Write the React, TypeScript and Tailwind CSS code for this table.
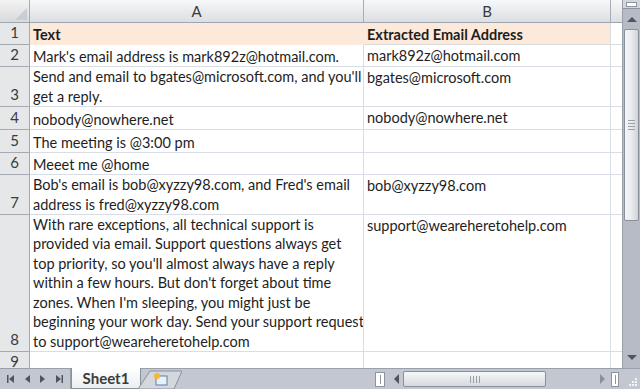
import React from "react";

const font = { fontFamily: "Lato, 'Open Sans', sans-serif" };

type Row = { n: number; h: number; a: string[]; b: string[] };

const rows: Row[] = [
  { n: 2, h: 22, a: ["Mark's email address is mark892z@hotmail.com."], b: ["mark892z@hotmail.com"] },
  { n: 3, h: 40, a: ["Send and email to bgates@microsoft.com, and you'll", "get a reply."], b: ["bgates@microsoft.com"] },
  { n: 4, h: 23, a: ["nobody@nowhere.net"], b: ["nobody@nowhere.net"] },
  { n: 5, h: 23, a: ["The meeting is @3:00 pm"], b: [] },
  { n: 6, h: 22, a: ["Meeet me @home"], b: [] },
  { n: 7, h: 40, a: ["Bob's email is bob@xyzzy98.com, and Fred's email", "address is fred@xyzzy98.com"], b: ["bob@xyzzy98.com"] },
  {
    n: 8,
    h: 137,
    a: [
      "With rare exceptions, all technical support is",
      "provided via email. Support questions always get",
      "top priority, so you'll almost always have a reply",
      "within a few hours. But don't forget about time",
      "zones. When I'm sleeping, you might just be",
      "beginning your work day. Send your support request",
      "to support@wearehere­tohelp.com".replace("\u00ad", ""),
    ],
    b: ["support@wearehere­tohelp.com".replace("\u00ad", "")],
  },
];

function Lines({ lines, bold }: { lines: string[]; bold?: boolean }) {
  return (
    <>
      {lines.map((l, i) => (
        <div key={i} className={"whitespace-nowrap leading-[19.5px] " + (bold ? "font-bold" : "")}>
          {l}
        </div>
      ))}
    </>
  );
}

function Tri({ dir, bar }: { dir: "l" | "r"; bar?: boolean }) {
  return (
    <svg width="10" height="10" viewBox="0 0 10 10">
      {dir === "l" ? (
        <>
          {bar && <rect x="1" y="1" width="1.5" height="8" fill="#4d5563" />}
          <polygon points="8,1 3,5 8,9" fill="#4d5563" />
        </>
      ) : (
        <>
          <polygon points="2,1 7,5 2,9" fill="#4d5563" />
          {bar && <rect x="7.5" y="1" width="1.5" height="8" fill="#4d5563" />}
        </>
      )}
    </svg>
  );
}

export default function App() {
  return (
    <div className="w-[640px] h-[389px] overflow-hidden flex flex-col bg-white text-[#1e1e1e]" style={font}>
      <div className="flex flex-1 min-h-0">
        {/* grid */}
        <div className="w-[622px] overflow-hidden flex flex-col">
          {/* column headers */}
          <div className="flex h-[23px] shrink-0 border-b border-[#9ea6b2] text-[15px] text-[#3b3b3b]">
            <div className="w-[30px] shrink-0 relative border-r border-[#a8adb5] bg-gradient-to-b from-[#f3f3f3] to-[#d9dadc]">
              <svg className="absolute right-[2px] bottom-[2px]" width="12" height="12" viewBox="0 0 12 12">
                <polygon points="12,0 12,12 0,12" fill="#c9ccd1" />
              </svg>
            </div>
            <div className="w-[334px] shrink-0 flex items-center justify-center border-r border-[#a8adb5] bg-gradient-to-b from-[#f7f8f9] to-[#dcdee2]">
              A
            </div>
            <div className="w-[247px] shrink-0 flex items-center justify-center border-r border-[#a8adb5] bg-gradient-to-b from-[#f7f8f9] to-[#dcdee2]">
              B
            </div>
            <div className="flex-1 bg-gradient-to-b from-[#f7f8f9] to-[#dcdee2]" />
          </div>
          {/* row 1 */}
          <div className="flex h-[22px] shrink-0 text-[14.5px]">
            <div className="w-[30px] shrink-0 flex items-end justify-center pb-[1px] border-r border-b border-[#a5aab2] bg-[#e6e7e9] text-[15px] text-[#3b3b3b]">
              1
            </div>
            <div className="w-[334px] shrink-0 bg-[#fde9d9] border-r border-b border-[#fde9d9] pl-[3px] flex items-end pb-[0px]">
              <Lines lines={["Text"]} bold />
            </div>
            <div className="w-[247px] shrink-0 bg-[#fde9d9] border-r border-b border-[#dadcdd] pl-[3px] flex items-end">
              <Lines lines={["Extracted Email Address"]} bold />
            </div>
            <div className="flex-1 border-b border-[#d8dde6]" />
          </div>
          {rows.map((r) => (
            <div key={r.n} className="flex shrink-0 text-[14.5px]" style={{ height: r.h }}>
              <div className="w-[30px] shrink-0 flex items-end justify-center pb-[1px] border-r border-b border-[#a5aab2] bg-[#e6e7e9] text-[15px] text-[#3b3b3b]">
                {r.n}
              </div>
              <div className="w-[334px] shrink-0 border-r border-b border-[#d8dde6] pl-[3px] flex flex-col justify-end overflow-hidden">
                <Lines lines={r.a} />
              </div>
              <div className="w-[247px] shrink-0 border-r border-b border-[#d8dde6] pl-[3px] flex flex-col justify-start pt-[1px] overflow-hidden">
                <Lines lines={r.b} />
              </div>
              <div className="flex-1 border-b border-[#d8dde6]" />
            </div>
          ))}
          {/* row 9 */}
          <div className="flex h-[22px] shrink-0">
            <div className="w-[30px] shrink-0 flex items-end justify-center pb-[1px] border-r border-b border-[#a5aab2] bg-[#e6e7e9] text-[15px] text-[#3b3b3b]">
              9
            </div>
            <div className="w-[334px] shrink-0 border-r border-b border-[#d8dde6]" />
            <div className="w-[247px] shrink-0 border-r border-b border-[#d8dde6]" />
            <div className="flex-1 border-b border-[#d8dde6]" />
          </div>
        </div>
        {/* vertical scrollbar */}
        <div className="w-[18px] shrink-0 flex flex-col bg-[#b6bbc5] border-l border-[#9aa0ab]">
          <div className="h-[9px] shrink-0 flex items-center justify-center bg-[#d3d6dc] border-b border-[#8e949f]">
            <div className="w-[11px] h-[5px] bg-white border border-[#8e949f]" />
          </div>
          <div className="h-[20px] shrink-0 flex items-center justify-center">
            <svg width="10" height="6" viewBox="0 0 10 6">
              <polygon points="0,6 5,1 10,6" fill="#4d5563" />
            </svg>
          </div>
          <div className="h-[192px] shrink-0 mx-[1px] rounded-[2px] border border-[#8a909a] bg-gradient-to-r from-[#f4f5f7] via-[#e9ebee] to-[#cfd3d9] flex items-center justify-center">
            <div className="flex flex-col gap-[2px]">
              <div className="w-[7px] h-[1px] bg-[#9aa0aa]" />
              <div className="w-[7px] h-[1px] bg-[#9aa0aa]" />
              <div className="w-[7px] h-[1px] bg-[#9aa0aa]" />
              <div className="w-[7px] h-[1px] bg-[#9aa0aa]" />
            </div>
          </div>
          <div className="flex-1" />
          <div className="h-[20px] shrink-0 flex items-center justify-center">
            <svg width="10" height="6" viewBox="0 0 10 6">
              <polygon points="0,0 10,0 5,5" fill="#4d5563" />
            </svg>
          </div>
        </div>
      </div>
      {/* bottom bar */}
      <div className="h-[21px] shrink-0 flex items-stretch bg-[#c3c7cf] border-t border-[#9aa0ab]">
        <div className="w-[71px] shrink-0 flex items-center justify-around px-[3px] border-r border-[#9aa0ab]">
          <Tri dir="l" bar />
          <Tri dir="l" />
          <Tri dir="r" />
          <Tri dir="r" bar />
        </div>
        <div className="flex items-stretch relative">
          <div className="w-[70px] -mt-[1px] flex items-center justify-center bg-gradient-to-b from-white to-[#eceef1] border-x border-b border-[#8a909a] font-bold text-[15px] text-[#3c3c3c] leading-none">
            Sheet1
          </div>
          <svg width="44" height="21" viewBox="0 0 44 21" className="-ml-[3px]">
            <polygon points="0,20 12,2 44,2 36,20" fill="#d4d8de" stroke="#8a909a" strokeWidth="1" />
            <rect x="18" y="7" width="11" height="9" fill="#e8f0fa" stroke="#5e7ea6" strokeWidth="1" />
            <circle cx="19" cy="7" r="3" fill="#f7b733" />
          </svg>
        </div>
        <div className="flex-1" />
        {/* horizontal scrollbar */}
        <div className="w-[247px] shrink-0 flex items-center">
          <div className="w-[10px] h-[15px] mr-[4px] bg-white border border-[#8e949f] flex items-center justify-center">
            <div className="w-[1px] h-[9px] bg-[#8e949f]" />
          </div>
          <div className="w-[14px] flex items-center justify-center">
            <svg width="6" height="10" viewBox="0 0 6 10">
              <polygon points="6,0 6,10 1,5" fill="#4d5563" />
            </svg>
          </div>
          <div className="w-[143px] h-[16px] rounded-[2px] border border-[#8a909a] bg-gradient-to-b from-[#f7f8f9] to-[#d6d9de] flex items-center justify-center">
            <div className="flex gap-[2px]">
              <div className="w-[1px] h-[7px] bg-[#9aa0aa]" />
              <div className="w-[1px] h-[7px] bg-[#9aa0aa]" />
              <div className="w-[1px] h-[7px] bg-[#9aa0aa]" />
              <div className="w-[1px] h-[7px] bg-[#9aa0aa]" />
            </div>
          </div>
          <div className="flex-1" />
          <div className="w-[12px] flex items-center justify-center">
            <svg width="6" height="10" viewBox="0 0 6 10">
              <polygon points="0,0 0,10 5,5" fill="#8a909a" />
            </svg>
          </div>
          <div className="w-[8px] h-[15px] ml-[2px] mr-[3px] bg-white border border-[#8e949f] flex items-center justify-center">
            <div className="w-[1px] h-[9px] bg-[#8e949f]" />
          </div>
        </div>
        <div className="w-[18px] shrink-0 flex items-end justify-end p-[2px]">
          <svg width="12" height="12" viewBox="0 0 12 12">
            {[
              [9, 1],
              [6, 4],
              [9, 4],
              [3, 7],
              [6, 7],
              [9, 7],
            ].map(([x, y], i) => (
              <rect key={i} x={x} y={y + 2} width="2" height="2" fill="#f4f5f7" />
            ))}
          </svg>
        </div>
      </div>
    </div>
  );
}
